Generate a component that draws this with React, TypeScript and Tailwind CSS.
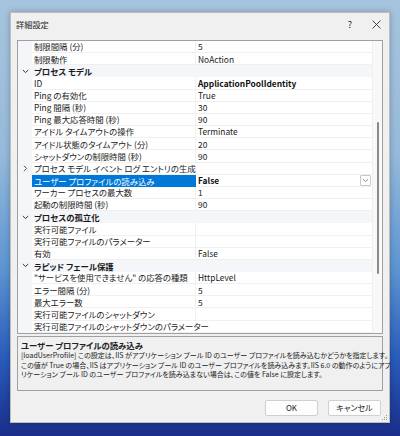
import React from "react";

type Row = {
  kind: "item" | "group" | "sub";
  name: string;
  value?: string;
  bold?: boolean;
  selected?: boolean;
};

const rows: Row[] = [
  { kind: "item", name: "制限間隔 (分)", value: "5" },
  { kind: "item", name: "制限動作", value: "NoAction" },
  { kind: "group", name: "プロセス モデル" },
  { kind: "item", name: "ID", value: "ApplicationPoolIdentity", bold: true },
  { kind: "item", name: "Ping の有効化", value: "True" },
  { kind: "item", name: "Ping 間隔 (秒)", value: "30" },
  { kind: "item", name: "Ping 最大応答時間 (秒)", value: "90" },
  { kind: "item", name: "アイドル タイムアウトの操作", value: "Terminate" },
  { kind: "item", name: "アイドル状態のタイムアウト (分)", value: "20" },
  { kind: "item", name: "シャットダウンの制限時間 (秒)", value: "90" },
  { kind: "sub", name: "プロセス モデル イベント ログ エントリの生成" },
  { kind: "item", name: "ユーザー プロファイルの読み込み", value: "False", bold: true, selected: true },
  { kind: "item", name: "ワーカー プロセスの最大数", value: "1" },
  { kind: "item", name: "起動の制限時間 (秒)", value: "90" },
  { kind: "group", name: "プロセスの孤立化" },
  { kind: "item", name: "実行可能ファイル" },
  { kind: "item", name: "実行可能ファイルのパラメーター" },
  { kind: "item", name: "有効", value: "False" },
  { kind: "group", name: "ラピッド フェール保護" },
  { kind: "item", name: "\"サービスを使用できません\" の応答の種類", value: "HttpLevel" },
  { kind: "item", name: "エラー間隔 (分)", value: "5" },
  { kind: "item", name: "最大エラー数", value: "5" },
  { kind: "item", name: "実行可能ファイルのシャットダウン" },
  { kind: "item", name: "実行可能ファイルのシャットダウンのパラメーター" },
];

function ChevronDown({ color = "#444" }: { color?: string }) {
  return (
    <svg width="7" height="5" viewBox="0 0 7 5">
      <path d="M0.8 1 L3.5 3.6 L6.2 1" fill="none" stroke={color} strokeWidth="1" />
    </svg>
  );
}

function ChevronRight() {
  return (
    <svg width="5" height="7" viewBox="0 0 5 7">
      <path d="M1 0.8 L3.6 3.5 L1 6.2" fill="none" stroke="#555" strokeWidth="1" />
    </svg>
  );
}

function GridRow({ row }: { row: Row }) {
  if (row.kind === "group") {
    return (
      <div className="flex h-[12.17px] items-center bg-[#f4f6fa]">
        <div className="flex w-[14px] shrink-0 justify-center pl-[1px]">
          <ChevronDown color="#333" />
        </div>
        <div className="pl-[2px] font-bold text-[#1a1a1a]">{row.name}</div>
      </div>
    );
  }
  return (
    <div className="flex h-[12.17px] items-stretch">
      <div className="flex w-[14px] shrink-0 items-center justify-center bg-[#f4f6fa] pl-[1px]">
        {row.kind === "sub" && <ChevronRight />}
      </div>
      <div
        className={
          row.selected
            ? "flex w-[164px] shrink-0 items-center bg-[#0078d7] pl-[2px] text-white"
            : "flex w-[164px] shrink-0 items-center border-b border-r border-[#f0f0f0] pl-[2px] text-[#222]"
        }
      >
        <span className="whitespace-nowrap">{row.name}</span>
      </div>
      <div
        className={
          row.bold
            ? "flex flex-1 items-center justify-between border-b border-[#f0f0f0] pl-[2px] pr-[1px] font-bold text-[#111]"
            : "flex flex-1 items-center justify-between border-b border-[#f0f0f0] pl-[2px] pr-[1px] text-[#222]"
        }
      >
        <span className="whitespace-nowrap">{row.value}</span>
        {row.selected && (
          <span className="flex h-[11px] w-[11px] items-center justify-center rounded-[1px] border border-[#c8c8c8] bg-white">
            <ChevronDown color="#888" />
          </span>
        )}
      </div>
    </div>
  );
}

export default function App() {
  return (
    <div className="h-[436px] w-[400px] overflow-hidden bg-[linear-gradient(180deg,#a6c4de_0%,#97badb_35%,#5b95d2_62%,#2a5cbc_82%,#1a2d8a_100%)] pl-[10px] pt-[12px] font-['Noto_Sans_CJK_JP','Noto_Sans',sans-serif] [font-feature-settings:'palt']">
      <div className="flex h-[411px] w-[380px] flex-col border border-[#bdbdbd] bg-[#f0f0f0] shadow-[0_0_6px_rgba(0,0,0,0.25)]">
        <div className="flex h-[21px] shrink-0 items-center justify-between pl-[5px] pr-[8px] pt-[2px] text-[8.2px] text-[#222]">
          <span>詳細設定</span>
          <div className="flex items-center gap-[20px]">
            <span className="text-[9px]">?</span>
            <svg width="9" height="9" viewBox="0 0 9 9">
              <path d="M0.5 0.5 L8.5 8.5 M8.5 0.5 L0.5 8.5" stroke="#333" strokeWidth="0.9" />
            </svg>
          </div>
        </div>

        <div className="mx-[6px] mt-[6px] flex h-[294px] shrink-0 border border-[#a0a0a0] bg-white text-[8.4px] leading-none">
          <div className="flex flex-1 flex-col">
            {rows.map((r, i) => (
              <GridRow key={i} row={r} />
            ))}
          </div>
          <div className="flex w-[10px] shrink-0 justify-center border-l border-[#f0f0f0] bg-[#f8f8f8] pt-[81px]">
            <div className="h-[152px] w-[2px] rounded-full bg-[#8a8a8a]" />
          </div>
        </div>

        <div className="mx-[6px] mt-[2px] h-[55px] shrink-0 border border-[#a0a0a0] bg-[#f0f0f0] px-[3px] pt-[3px] text-[#222]">
          <div className="text-[8.4px] font-bold leading-[10px]">ユーザー プロファイルの読み込み</div>
          <div className="mt-[1px] text-[7px] leading-[9.7px]">
            <div className="whitespace-nowrap">[loadUserProfile] この設定は、IIS がアプリケーション プール ID のユーザー プロファイルを読み込むかどうかを指定します。</div>
            <div className="whitespace-nowrap">この値が True の場合、IIS はアプリケーション プール ID のユーザー プロファイルを読み込みます。IIS 6.0 の動作のようにアプ</div>
            <div className="whitespace-nowrap">リケーション プール ID のユーザー プロファイルを読み込まない場合は、この値を False に設定します。</div>
          </div>
        </div>

        <div className="relative flex flex-1 items-start justify-end gap-[10px] pr-[8px] pt-[9px]">
          <button className="h-[16px] w-[53px] rounded-[2px] border border-[#d0d0d0] bg-[#fdfdfd] text-[8px] text-[#222]">OK</button>
          <button className="h-[16px] w-[53px] rounded-[2px] border border-[#d0d0d0] bg-[#fdfdfd] text-[8px] text-[#222]">キャンセル</button>
          <svg className="absolute bottom-[1px] right-[1px]" width="6" height="6" viewBox="0 0 6 6">
            <g fill="#9a9a9a">
              <rect x="4" y="0" width="1" height="1" />
              <rect x="2" y="2" width="1" height="1" />
              <rect x="4" y="2" width="1" height="1" />
              <rect x="0" y="4" width="1" height="1" />
              <rect x="2" y="4" width="1" height="1" />
              <rect x="4" y="4" width="1" height="1" />
            </g>
          </svg>
        </div>
      </div>
    </div>
  );
}
